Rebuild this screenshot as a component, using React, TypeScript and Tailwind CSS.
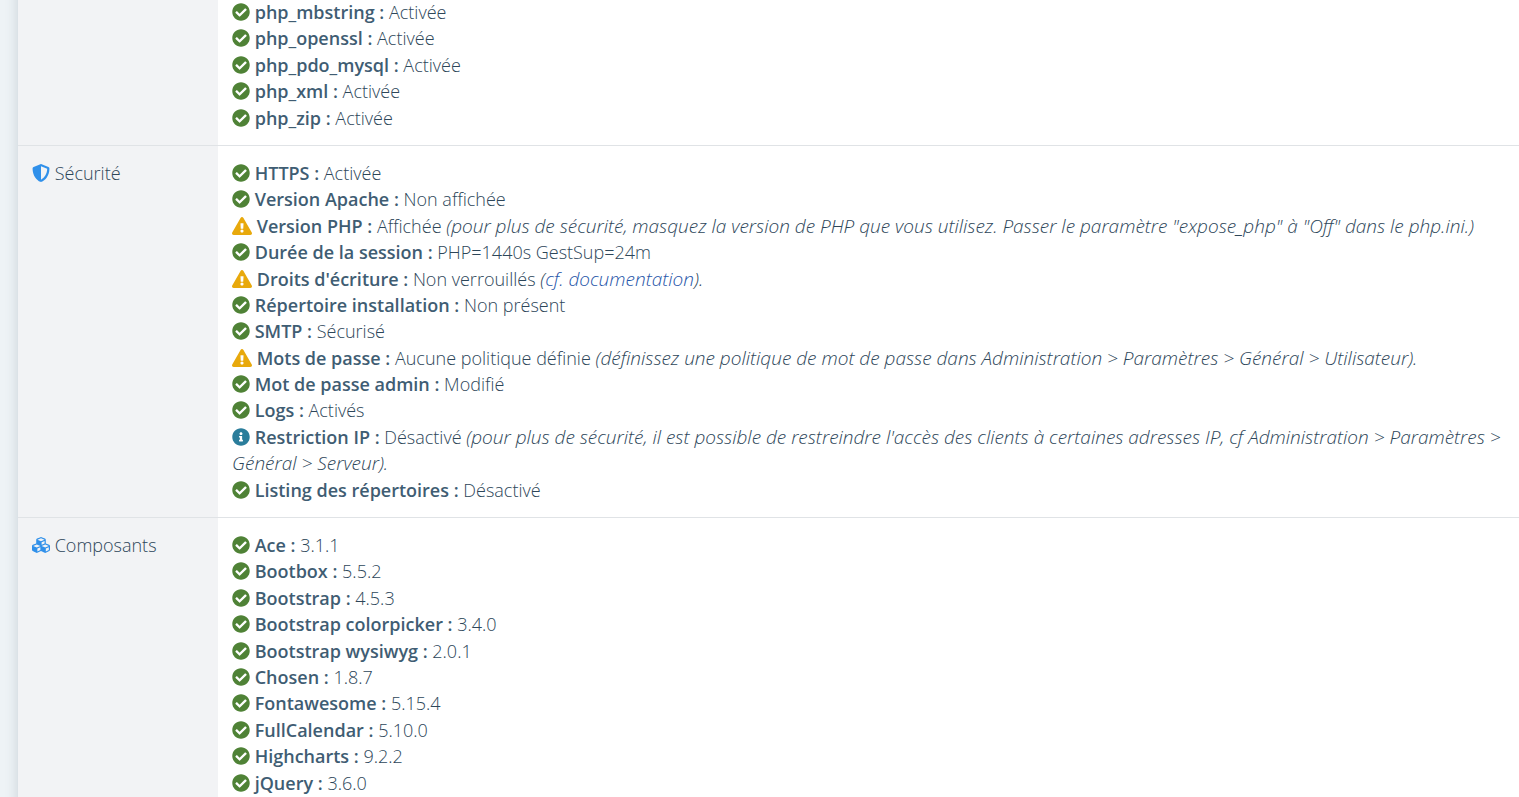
import type { ReactNode } from "react";
import { FaCheckCircle, FaCubes, FaExclamationTriangle, FaInfoCircle, FaShieldAlt } from "react-icons/fa";

type Status = "ok" | "warning" | "info";

type Check = { label: string; value: string; note?: ReactNode; status?: Status };

const extensions: Check[] = ["php_mbstring", "php_openssl", "php_pdo_mysql", "php_xml", "php_zip"].map((label) => ({
  label,
  value: "Activée",
}));

const security: Check[] = [
  { label: "HTTPS", value: "Activée" },
  { label: "Version Apache", value: "Non affichée" },
  {
    label: "Version PHP",
    value: "Affichée",
    status: "warning",
    note: '(pour plus de sécurité, masquez la version de PHP que vous utilisez. Passer le paramètre "expose_php" à "Off" dans le php.ini.)',
  },
  { label: "Durée de la session", value: "PHP=1440s GestSup=24m" },
  {
    label: "Droits d'écriture",
    value: "Non verrouillés",
    status: "warning",
    note: (
      <>
        (<a href="#documentation" className="text-[#1f55a8] hover:underline">cf. documentation</a>).
      </>
    ),
  },
  { label: "Répertoire installation", value: "Non présent" },
  { label: "SMTP", value: "Sécurisé" },
  {
    label: "Mots de passe",
    value: "Aucune politique définie",
    status: "warning",
    note: "(définissez une politique de mot de passe dans Administration > Paramètres > Général > Utilisateur).",
  },
  { label: "Mot de passe admin", value: "Modifié" },
  { label: "Logs", value: "Activés" },
  {
    label: "Restriction IP",
    value: "Désactivé",
    status: "info",
    note: "(pour plus de sécurité, il est possible de restreindre l'accès des clients à certaines adresses IP, cf Administration > Paramètres > Général > Serveur).",
  },
  { label: "Listing des répertoires", value: "Désactivé" },
];

const components: Check[] = [
  { label: "Ace", value: "3.1.1" },
  { label: "Bootbox", value: "5.5.2" },
  { label: "Bootstrap", value: "4.5.3" },
  { label: "Bootstrap colorpicker", value: "3.4.0" },
  { label: "Bootstrap wysiwyg", value: "2.0.1" },
  { label: "Chosen", value: "1.8.7" },
  { label: "Fontawesome", value: "5.15.4" },
  { label: "FullCalendar", value: "5.10.0" },
  { label: "Highcharts", value: "9.2.2" },
  { label: "jQuery", value: "3.6.0" },
];

function StatusIcon({ status }: { status: Status }) {
  if (status === "warning")
    return <FaExclamationTriangle aria-hidden className="inline-block h-[18px] w-5 align-[-2px] text-[#e8a90c]" />;
  if (status === "info")
    return <FaInfoCircle aria-hidden className="inline-block size-[18px] align-[-2px] text-[#2a7d9b]" />;
  return <FaCheckCircle aria-hidden className="inline-block size-[18px] align-[-2px] text-[#4f8236]" />;
}

function Section({ heading, checks }: { heading?: ReactNode; checks: Check[] }) {
  return (
    <tr className="border-b border-[#e0e3e6]">
      <th scope="row" className="w-[200px] bg-[#f2f3f5] px-[14px] py-[14px] text-left align-top font-light">
        {heading}
      </th>
      <td className="px-[14px] py-[14px] align-top">
        <ul>
          {checks.map((check) => (
            <li key={check.label}>
              <StatusIcon status={check.status ?? "ok"} />{" "}
              <strong className="font-semibold text-[#3f5d73]">{check.label} :</strong> {check.value}
              {check.note && <> <i className="text-[19px] leading-none">{check.note}</i></>}
            </li>
          ))}
        </ul>
      </td>
    </tr>
  );
}

export default function App() {
  return (
    <main className="h-screen overflow-hidden bg-[#eef3f6] pl-[18px] font-['Open_Sans',sans-serif] text-[18px] leading-[1.467] font-light text-[#2d4659]">
      <div className="bg-white shadow-[0_0_12px_rgba(60,80,100,0.22)]">
        <table className="-mt-[15px] w-full table-fixed border-collapse">
          <tbody>
            <Section checks={extensions} />
            <Section
              heading={
                <>
                  <FaShieldAlt aria-hidden className="inline-block size-[18px] align-[-2px] text-[#3090ea]" /> Sécurité
                </>
              }
              checks={security}
            />
            <Section
              heading={
                <>
                  <FaCubes aria-hidden className="inline-block size-[18px] align-[-2px] text-[#3090ea]" /> Composants
                </>
              }
              checks={components}
            />
          </tbody>
        </table>
      </div>
    </main>
  );
}
